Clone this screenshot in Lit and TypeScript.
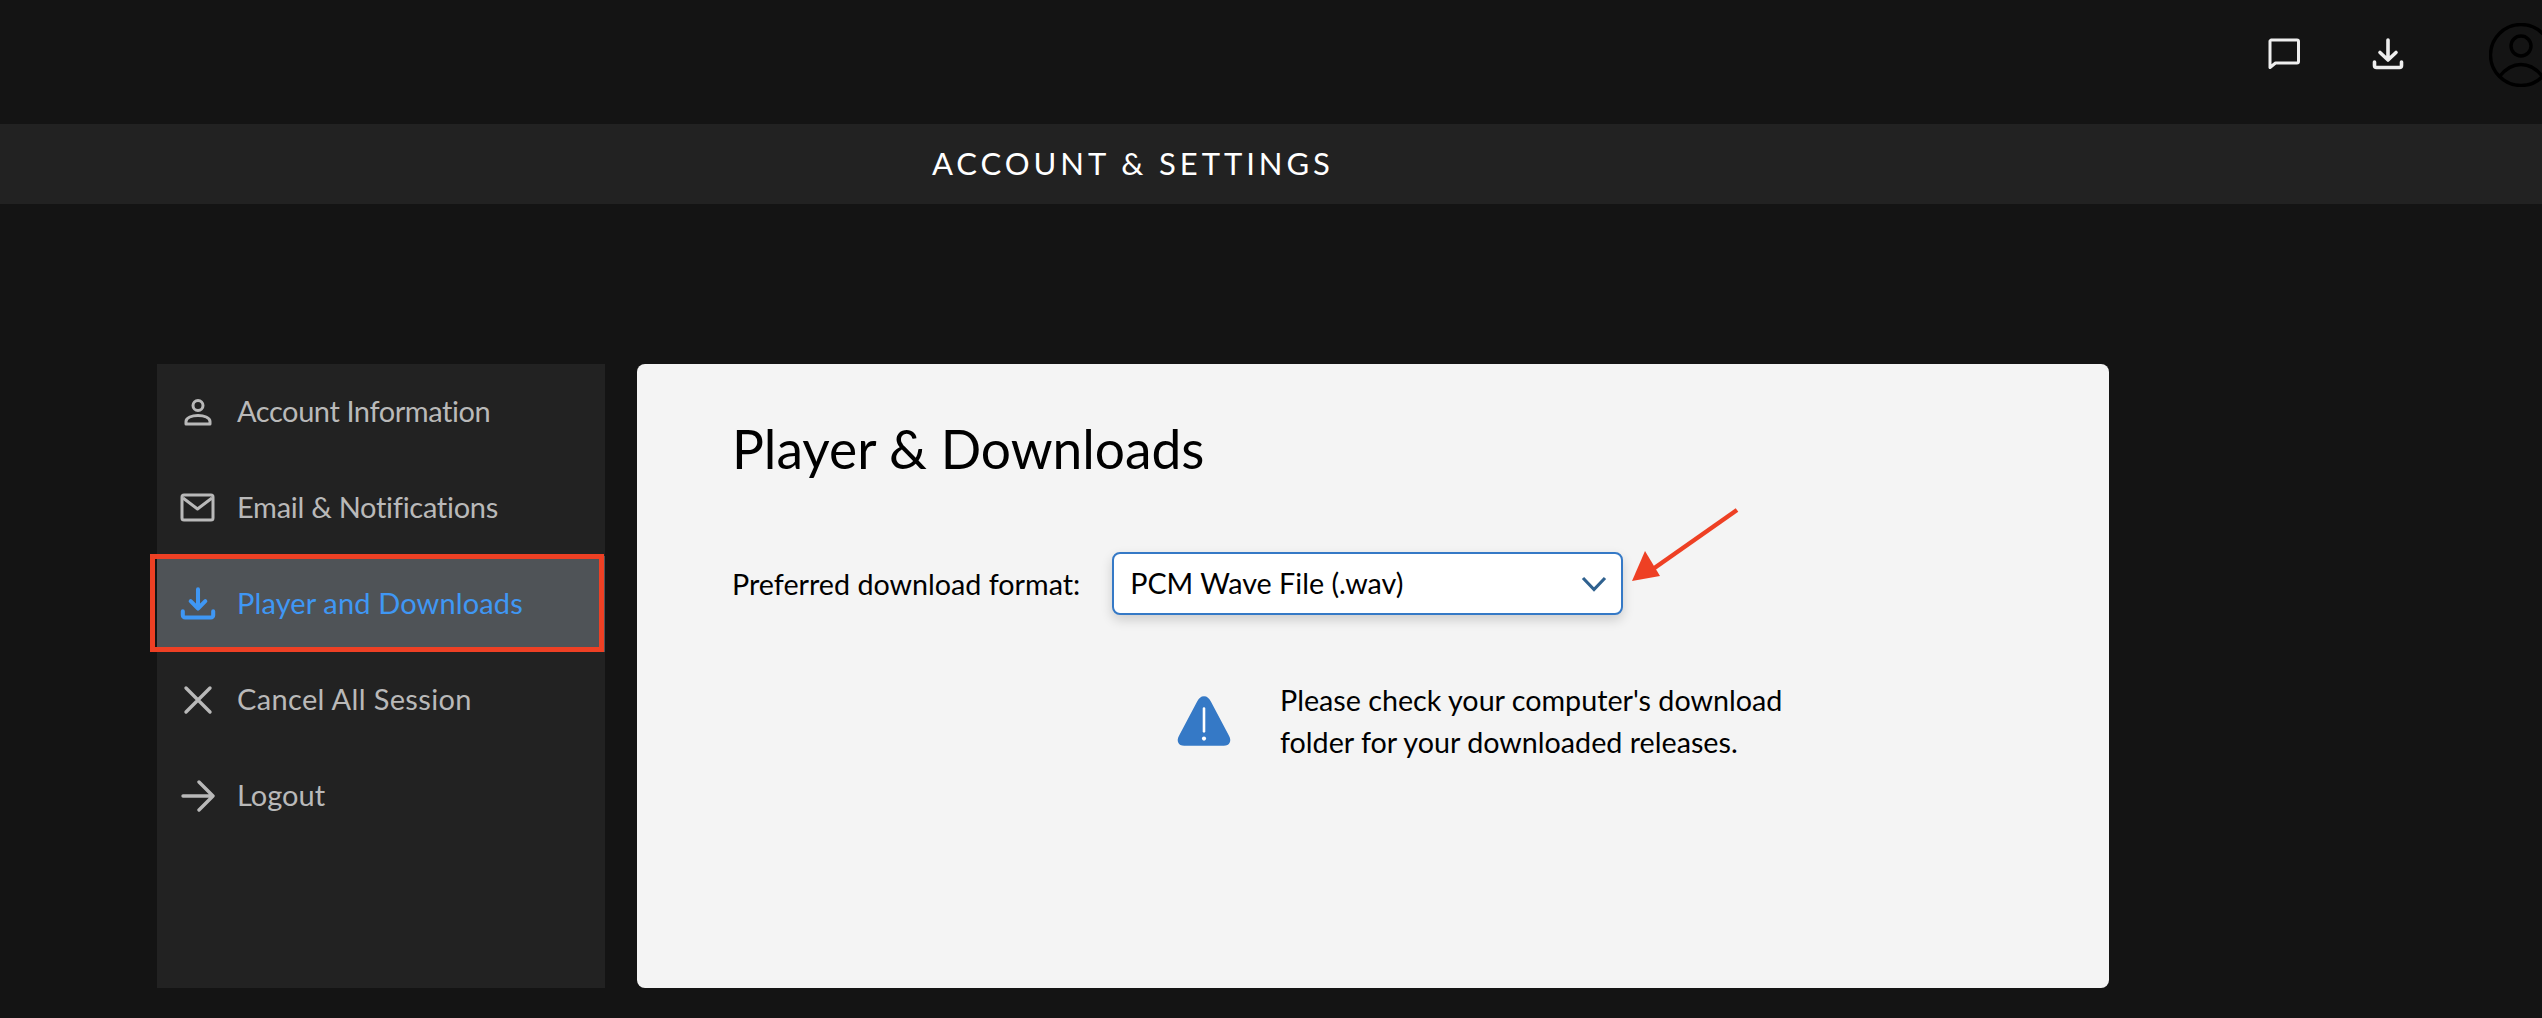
import { LitElement, html, css } from "lit";
import { customElement } from "lit/decorators.js";

@customElement("app-root")
export class AppRoot extends LitElement {
  static styles = css`
    :host { display: block; width: 2542px; height: 1018px; overflow: hidden; background: #141414; font-family: Lato, "Noto Sans", sans-serif; position: relative; }
    .top { height: 124px; display: flex; align-items: flex-start; position: relative; overflow: hidden; }
    .top svg { display: block; flex: none; }
    .i-chat { margin: 36px 0 0 2266px; }
    .i-dl { margin: 36px 0 0 68px; }
    .i-user { margin: 23px 0 0 83px; }
    .band { height: 80px; background: #222222; display: flex; align-items: center; padding-left: 932px; color: #fff; font-size: 31px; letter-spacing: 3.95px; }
    .band span { margin-top: -3px; }
    .content { display: flex; gap: 32px; padding: 160px 0 0 157px; }
    .side { width: 448px; height: 624px; background: #222222; flex: none; }
    .item { height: 96px; display: flex; align-items: center; color: #b9b9b9; font-size: 29px; position: relative; }
    .item .ic { width: 81px; flex: none; display: flex; justify-content: center; box-sizing: border-box; }
    .item .ic svg { display: block; }
    .item .t { margin: -4px 0 0 -1px; }
    .t.account { letter-spacing: -0.43px; }
    .t.email { letter-spacing: -0.28px; }
    .t.player { letter-spacing: 0.13px; }
    .t.cancel { letter-spacing: 0.35px; }
    .item.active { background: #4f5357; color: #3f97f4; }
    .mark { position: absolute; left: -7px; top: -2px; width: 444px; height: 88px; border: 5px solid #ee4024; pointer-events: none; }
    .card { width: 1472px; height: 624px; background: #f4f4f4; border-radius: 8px; box-sizing: border-box; padding: 46px 0 0 95px; color: #000; flex: none; }
    h1 { margin: 0; font-weight: 400; font-size: 53.3px; line-height: 76px; }
    .row { display: flex; align-items: center; margin-top: 66px; font-size: 28.7px; position: relative; }
    .select { margin-left: 32px; width: 511px; height: 63px; box-sizing: border-box; background: #fff; border: 2px solid #3579c6; border-radius: 8px; box-shadow: 0 5px 12px rgba(0,0,0,.16); display: flex; align-items: center; justify-content: space-between; padding: 0 14px 0 16px; position: relative; }
    .select span { margin-top: -2px; }
    .arrow { position: absolute; left: 515px; top: -46px; overflow: visible; }
    .note { display: flex; align-items: center; margin: 64px 0 0 443px; line-height: 42px; font-size: 28.7px; }
    .note svg { flex: none; margin-right: 47px; display: block; }
  `;

  render() {
    return html`
      <div class="top">
        <svg class="i-chat" width="36" height="34" viewBox="0 0 36 34" fill="none" stroke="#eeeeee" stroke-width="3" stroke-linejoin="round"><path d="M5 4h26a1.500 1.500 0 0 1 1.500 1.500v20a1.500 1.500 0 0 1-1.500 1.500H9.500L4 31.500V5z"/></svg>
        <svg class="i-dl" width="36" height="36" viewBox="0 0 36 36" fill="none" stroke="#eeeeee" stroke-width="3.6" stroke-linecap="round" stroke-linejoin="round"><path d="M18 4v20M10 16.500l8 7.500 8-7.500M4.500 26v3.500a2 2 0 0 0 2 2h23a2 2 0 0 0 2-2V26"/></svg>
        <svg class="i-user" width="64" height="64" viewBox="0 0 64 64" fill="none" stroke="#000" stroke-width="3.4"><circle cx="32" cy="32" r="30.500"/><circle cx="32" cy="23" r="10"/><path d="M10.500 53.500C18 44 25 41.500 32 41.500s14 2.500 21.500 12"/></svg>
      </div>
      <div class="band"><span>ACCOUNT &amp; SETTINGS</span></div>
      <div class="content">
        <nav class="side">
          <div class="item"><span class="ic"><svg width="30" height="30" viewBox="0 0 30 30" fill="none" stroke="#b9b9b9" stroke-width="3"><circle cx="15" cy="8.500" r="5"/><path d="M3 24.500c0-4 6-6 12-6s12 2 12 6v2.500H3z" stroke-linejoin="round"/></svg></span><span class="t account">Account Information</span></div>
          <div class="item"><span class="ic"><svg width="36" height="30" viewBox="0 0 36 30" fill="none" stroke="#b9b9b9" stroke-width="3" stroke-linejoin="round"><rect x="2" y="2" width="31" height="25" rx="2"/><path d="M3 5l14.500 11L32 5"/></svg></span><span class="t email">Email &amp; Notifications</span></div>
          <div class="item active"><span class="ic"><svg width="36" height="36" viewBox="0 0 32 32" fill="none" stroke="#3f97f4" stroke-width="3.600" stroke-linecap="round" stroke-linejoin="round"><path d="M16 3v17M9.500 13.500 16 20l6.500-6.500M2.500 22.500v3.500a2 2 0 0 0 2 2h23a2 2 0 0 0 2-2v-3.500"/></svg></span><span class="t player">Player and Downloads</span><span class="mark"></span></div>
          <div class="item"><span class="ic"><svg width="30" height="30" viewBox="0 0 30 30" fill="none" stroke="#b9b9b9" stroke-width="3.400" stroke-linecap="round"><path d="M3 3l24 24M27 3 3 27"/></svg></span><span class="t cancel">Cancel All Session</span></div>
          <div class="item"><span class="ic"><svg width="34" height="32" viewBox="0 0 34 32" fill="none" stroke="#b9b9b9" stroke-width="3.400" stroke-linecap="round" stroke-linejoin="round"><path d="M2 16h29M18 2l14 14-14 14"/></svg></span><span class="t">Logout</span></div>
        </nav>
        <main class="card">
          <h1>Player &amp; Downloads</h1>
          <div class="row">
            <span>Preferred download format:</span>
            <div class="select">
              <span>PCM Wave File (.wav)</span>
              <svg width="26" height="16" viewBox="0 0 26 16" fill="none" stroke="#2f618f" stroke-width="3.200"><path d="M2 2l11 11.500L24 2"/></svg>
              <svg class="arrow" width="110" height="76" viewBox="0 0 110 76"><path d="M108 2 24 61" stroke="#ee4024" stroke-width="4.500" fill="none"/><path d="M3 73 16 43 31 68z" fill="#ee4024"/></svg>
            </div>
          </div>
          <div class="note">
            <svg width="58" height="52" viewBox="0 0 56 50"><path d="M28 1c3 0 5 2 6.500 5L52 39c3 5 1 10-5 10H9c-6 0-8-5-5-10L21.500 6C23 3 25 1 28 1z" fill="#3579c6"/><path d="M28 13v22" stroke="#fff" stroke-width="2.500" stroke-linecap="round"/><circle cx="28" cy="42" r="2" fill="#fff"/></svg>
            <div>Please check your computer's download<br />folder for your downloaded releases.</div>
          </div>
        </main>
      </div>
    `;
  }
}
